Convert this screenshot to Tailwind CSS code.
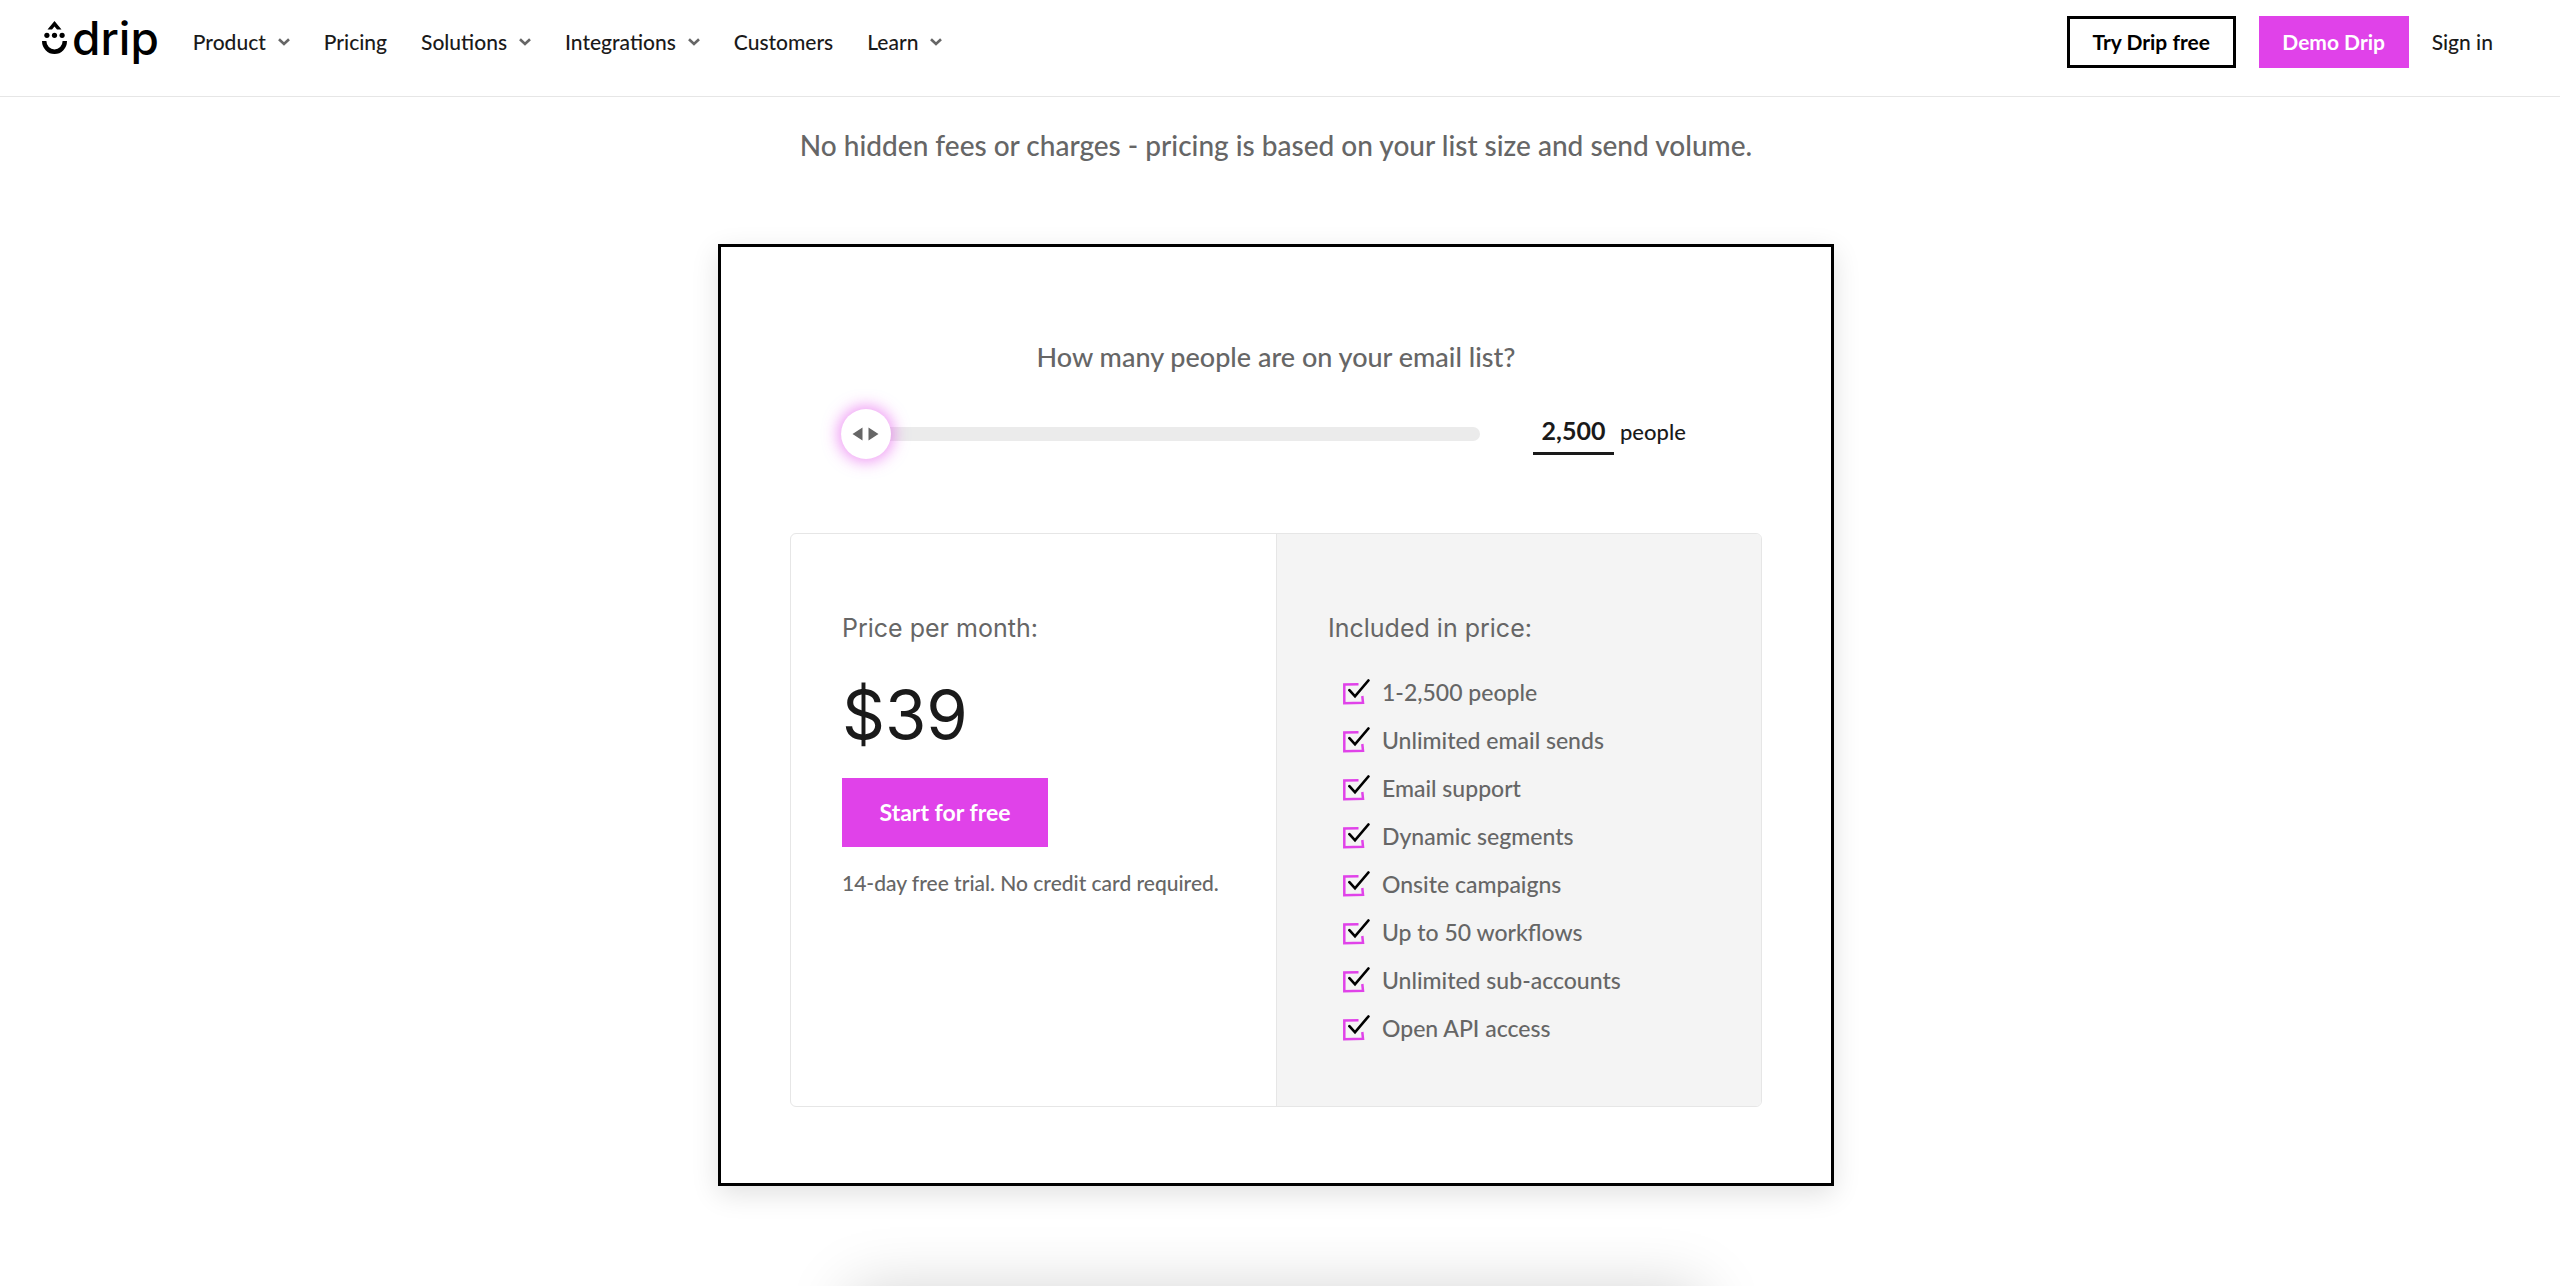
<!DOCTYPE html>
<html lang="en">
<head>
    <meta charset="UTF-8">
    <meta name="viewport" content="width=device-width, initial-scale=1.0">
    <title>Drip Pricing</title>
    <script src="https://cdn.jsdelivr.net/npm/@tailwindcss/browser@4"></script>
</head>
<body class="h-screen overflow-hidden bg-white font-['Lato',sans-serif] font-medium text-[#666]">
    <svg class="hidden">
        <symbol id="chevron" viewBox="0 0 12 8">
            <path d="M1 1.200 6 6l5-4.800" fill="none" stroke="#666" stroke-width="2.600"/>
        </symbol>
        <symbol id="check" viewBox="0 0 27 26">
            <path d="M15.500 5.200 1.300 5.500V24.200L20 23.700 19.300 17" fill="none" stroke="#e042e9" stroke-width="2.500"/>
            <path d="M6.400 11.200 12 17.300 25.400 1.500" fill="none" stroke="#000" stroke-width="2.700" stroke-linecap="round"/>
        </symbol>
    </svg>

    <header class="flex h-[97px] items-start justify-between border-b border-[#e6e6e6] pt-4 pr-[67px] pl-[42px] text-[21px] text-[#1a1a1a]">
        <div class="flex items-start gap-[34px]">
            <!-- Logo -->
            <a href="#" class="flex h-11 items-center gap-1 text-black">
                <svg class="h-[34px] w-[26px]" viewBox="0 0 26 34">
                    <path d="M12.500 0 19.500 8.500H15L12.500 5.500 10 8.500H5.500Z"/>
                    <circle cx="4.900" cy="14.300" r="2.600"/>
                    <circle cx="12.500" cy="14.300" r="2.600"/>
                    <circle cx="20.100" cy="14.300" r="2.600"/>
                    <path d="M2.200 20a10.300 10.800 0 0 0 20.600 0" fill="none" stroke="#000" stroke-width="4.400"/>
                </svg>
                <span class="font-['Inter',sans-serif] text-[46px] leading-10 font-medium">drip</span>
            </a>
            <nav class="flex h-[52px] items-center gap-[34px]">
                <button type="button" class="flex items-center gap-3">Product <svg class="h-2 w-3"><use href="#chevron"/></svg></button>
                <a href="#">Pricing</a>
                <button type="button" class="flex items-center gap-3">Solutions <svg class="h-2 w-3"><use href="#chevron"/></svg></button>
                <button type="button" class="flex items-center gap-3">Integrations <svg class="h-2 w-3"><use href="#chevron"/></svg></button>
                <a href="#">Customers</a>
                <button type="button" class="flex items-center gap-3">Learn <svg class="h-2 w-3"><use href="#chevron"/></svg></button>
            </nav>
        </div>
        <div class="flex h-[52px] items-center gap-[23px]">
            <a href="#" class="flex h-[52px] w-[169px] items-center justify-center border-3 border-black font-bold text-black">Try Drip free</a>
            <a href="#" class="flex h-[52px] w-[150px] items-center justify-center bg-[#e042e9] font-bold text-white">Demo Drip</a>
            <a href="#">Sign in</a>
        </div>
    </header>

    <main class="flex flex-col items-center pt-7 pr-2">
        <p class="text-[28px] leading-10">No hidden fees or charges - pricing is based on your list size and send volume.</p>

        <!-- Calculator -->
        <section class="mt-[79px] w-full max-w-[1116px] border-3 border-black bg-white px-[69px] pt-[90px] pb-[76px] shadow-[0_8px_26px_rgba(0,0,0,0.12)]">
            <label for="range" class="block text-center text-[27px] leading-10">How many people are on your email list?</label>
            <div class="mt-8 flex h-[50px] items-center gap-[53px] px-[51px]">
                <input id="range" type="range" min="0" max="100" value="0" class="h-[14px] flex-1 appearance-none rounded-full bg-[#ebebeb] [&::-webkit-slider-thumb]:size-[50px] [&::-webkit-slider-thumb]:appearance-none [&::-webkit-slider-thumb]:rounded-full [&::-webkit-slider-thumb]:bg-white [&::-webkit-slider-thumb]:bg-[url(data:image/svg+xml,%3Csvg%20xmlns=%22http://www.w3.org/2000/svg%22%20viewBox=%220%200%2050%2050%22%3E%3Cpath%20d=%22M11.5%2025l10-6.500v13zM37.500%2025l-10-6.500v13z%22%20fill=%22%23666%22/%3E%3C/svg%3E)] [&::-webkit-slider-thumb]:shadow-[0_0_15px_3px_rgba(224,66,233,0.55)]">
                <div class="flex w-[178px] items-baseline gap-[6px] text-[#1a1a1a]">
                    <input id="people" type="text" value="2,500" class="w-[81px] border-b-3 border-[#1a1a1a] pb-[6px] text-center text-[25px] leading-8 font-bold">
                    <label for="people" class="text-[22px]">people</label>
                </div>
            </div>

            <div class="mt-[74px] grid grid-cols-2 overflow-hidden rounded-md border border-[#e6e6e6]">
                <div class="px-[51px] pt-[78px] pb-[54px]">
                    <h2 class="font-['Inter',sans-serif] text-[25px] leading-8 font-normal">Price per month:</h2>
                    <p class="mt-[39px] font-['Inter',sans-serif] text-[67px] leading-16 font-normal text-[#1a1a1a]">$39</p>
                    <a href="#" class="mt-[31px] flex h-[69px] w-[206px] items-center justify-center bg-[#e042e9] text-[23px] font-bold text-white">Start for free</a>
                    <p class="mt-5 text-[21px] leading-8">14-day free trial. No credit card required.</p>
                </div>
                <div class="border-l border-[#e6e6e6] bg-[#f4f4f4] px-[51px] pt-[78px] pb-[54px]">
                    <h2 class="font-['Inter',sans-serif] text-[25px] leading-8 font-normal">Included in price:</h2>
                    <ul class="mt-6 pl-[15px] text-[23px] leading-12">
                        <li class="flex items-center gap-3"><svg class="h-[26px] w-[27px]"><use href="#check"/></svg>1-2,500 people</li>
                        <li class="flex items-center gap-3"><svg class="h-[26px] w-[27px]"><use href="#check"/></svg>Unlimited email sends</li>
                        <li class="flex items-center gap-3"><svg class="h-[26px] w-[27px]"><use href="#check"/></svg>Email support</li>
                        <li class="flex items-center gap-3"><svg class="h-[26px] w-[27px]"><use href="#check"/></svg>Dynamic segments</li>
                        <li class="flex items-center gap-3"><svg class="h-[26px] w-[27px]"><use href="#check"/></svg>Onsite campaigns</li>
                        <li class="flex items-center gap-3"><svg class="h-[26px] w-[27px]"><use href="#check"/></svg>Up to 50 workflows</li>
                        <li class="flex items-center gap-3"><svg class="h-[26px] w-[27px]"><use href="#check"/></svg>Unlimited sub-accounts</li>
                        <li class="flex items-center gap-3"><svg class="h-[26px] w-[27px]"><use href="#check"/></svg>Open API access</li>
                    </ul>
                </div>
            </div>
        </section>

        <!-- Top of the next card -->
        <section class="mt-[104px] h-80 w-full max-w-[850px] bg-white shadow-[0_0_60px_rgba(0,0,0,0.18)]"></section>
    </main>
</body>
</html>
